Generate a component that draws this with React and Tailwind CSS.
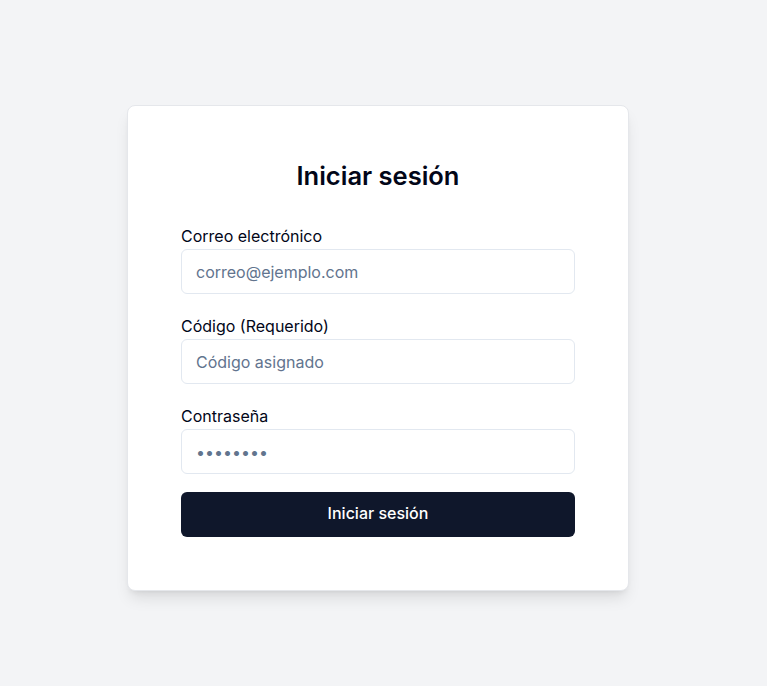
import React, { useState } from 'react';

const Field = ({ label, type, placeholder, value, onChange }) => (
    <div className="flex flex-col">
        <label className="text-base leading-5 font-normal text-slate-950 mb-[3px]">{label}</label>
        <input
            type={type}
            placeholder={placeholder}
            value={value}
            onChange={onChange}
            className="h-[45px] w-full rounded-md border border-slate-200 bg-white px-[14px] text-base text-slate-900 placeholder:text-slate-500 outline-none"
        />
    </div>
);

const App = () => {
    const [email, setEmail] = useState('');
    const [code, setCode] = useState('');
    const [password, setPassword] = useState('');

    return (
        <div
            className="min-h-screen w-full bg-gray-100 flex items-center justify-center pr-[11px] pt-[10px]"
            style={{ fontFamily: 'Inter, "Noto Sans", sans-serif' }}
        >
            <div className="w-[502px] bg-white rounded-lg border border-gray-200 shadow-lg px-[53px] pt-[52px] pb-[53px]">
                <h1 className="text-[25.5px] leading-9 font-semibold text-slate-950 text-center mb-[32px]">Iniciar sesión</h1>
                <form className="flex flex-col gap-[22px]" onSubmit={(e) => e.preventDefault()}>
                    <Field label="Correo electrónico" type="email" placeholder="correo@ejemplo.com" value={email} onChange={(e) => setEmail(e.target.value)} />
                    <Field label="Código (Requerido)" type="text" placeholder="Código asignado" value={code} onChange={(e) => setCode(e.target.value)} />
                    <Field label="Contraseña" type="password" placeholder="••••••••" value={password} onChange={(e) => setPassword(e.target.value)} />
                    <button type="submit" className="h-[45px] w-full rounded-md bg-slate-900 text-white text-base leading-5 font-medium -mt-[4px] pb-[3px]">
                        Iniciar sesión
                    </button>
                </form>
            </div>
        </div>
    );
};

export default App;
